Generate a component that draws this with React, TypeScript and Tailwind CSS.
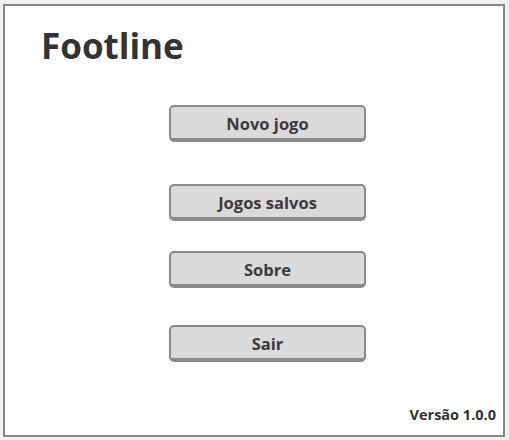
import React from 'react';

const MenuButton: React.FC<{ label: string; className?: string }> = ({ label, className }) => (
    <button
        className={`w-[197px] h-[37px] pt-[3px] rounded-[5px] border-2 border-b-4 border-[#8a8a8a] bg-[#dadada] text-[16.5px] font-bold text-[#3a3a3a] leading-none ${className || ''}`}
    >
        {label}
    </button>
);

const App: React.FC = () => {
    return (
        <div className="w-[509px] h-[440px] bg-[#f0f0f0] pt-[4px] pl-[3px]" style={{ fontFamily: '"Open Sans", "Noto Sans", sans-serif' }}>
            <div className="w-[502px] h-[433px] border-2 border-[#878787] bg-white flex flex-col">
                <h1 className="ml-[36px] mt-[18px] text-[35px] font-bold text-[#333333] leading-[44px]">Footline</h1>
                <div className="flex flex-col items-start ml-[164px]">
                    <MenuButton label="Novo jogo" className="mt-[37px]" />
                    <MenuButton label="Jogos salvos" className="mt-[42px]" />
                    <MenuButton label="Sobre" className="mt-[30px]" />
                    <MenuButton label="Sair" className="mt-[37px]" />
                </div>
                <div className="mt-auto mb-[9px] mr-[7px] text-right text-[14.5px] font-bold text-[#333333]">Versão 1.0.0</div>
            </div>
        </div>
    );
};

export default App;
